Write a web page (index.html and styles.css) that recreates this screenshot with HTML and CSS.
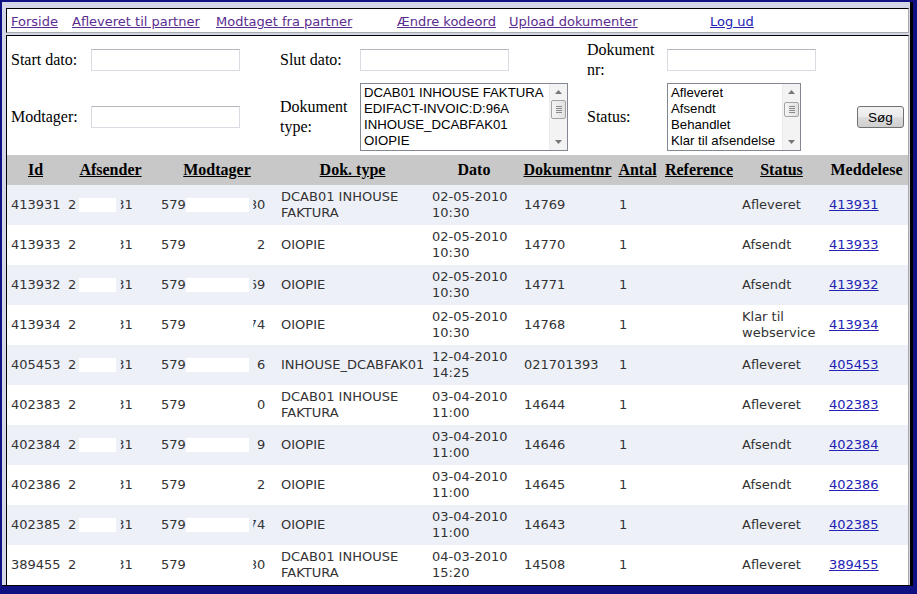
FILE: index.html
```html
<!DOCTYPE html>
<html lang="da">
<head>
<meta charset="utf-8">
<title>Dokumenter</title>
<link rel="stylesheet" href="styles.css">
</head>
<body>
<div class="frame">
  <nav class="nav">
    <a class="v" href="#">Forside</a>
    <a class="v" href="#">Afleveret til partner</a>
    <a class="v" href="#">Modtaget fra partner</a>
    <a class="v" href="#">Ændre kodeord</a>
    <a class="v" href="#">Upload dokumenter</a>
    <a href="#">Log ud</a>
  </nav>
  <div class="panel">
    <form class="filters">
      <label class="lbl">Start dato:</label>
      <input class="txt" type="text">
      <label class="lbl">Slut dato:</label>
      <input class="txt" type="text">
      <label class="lbl">Dokument nr:</label>
      <input class="txt" type="text">
      <span></span>

      <label class="lbl">Modtager:</label>
      <input class="txt" type="text">
      <label class="lbl">Dokument type:</label>
      <div class="listbox lb-type">
        <ul class="opts">
          <li>DCAB01 INHOUSE FAKTURA</li>
          <li>EDIFACT-INVOIC:D:96A</li>
          <li>INHOUSE_DCABFAK01</li>
          <li>OIOPIE</li>
        </ul>
        <div class="sb">
          <span class="sb-btn"><svg width="7" height="4" viewBox="0 0 7 4"><path d="M0 4L3.5 0L7 4Z"/></svg></span>
          <span class="sb-thumb t1"><i></i><i></i><i></i><i></i></span>
          <span class="sb-fill"></span>
          <span class="sb-btn"><svg width="7" height="4" viewBox="0 0 7 4"><path d="M0 0L3.5 4L7 0Z"/></svg></span>
        </div>
      </div>
      <label class="lbl">Status:</label>
      <div class="listbox lb-status">
        <ul class="opts">
          <li>Afleveret</li>
          <li>Afsendt</li>
          <li>Behandlet</li>
          <li>Klar til afsendelse</li>
        </ul>
        <div class="sb">
          <span class="sb-btn"><svg width="7" height="4" viewBox="0 0 7 4"><path d="M0 4L3.5 0L7 4Z"/></svg></span>
          <span class="sb-thumb t2"><i></i><i></i><i></i><i></i></span>
          <span class="sb-fill"></span>
          <span class="sb-btn"><svg width="7" height="4" viewBox="0 0 7 4"><path d="M0 0L3.5 4L7 0Z"/></svg></span>
        </div>
      </div>
      <button class="btn" type="button">Søg</button>
    </form>

    <table class="grid">
      <colgroup>
        <col class="c-id"><col class="c-afs"><col class="c-mod"><col class="c-type"><col class="c-dato">
        <col class="c-nr"><col class="c-antal"><col class="c-ref"><col class="c-status"><col class="c-med">
      </colgroup>
      <thead>
        <tr>
          <th><a href="#">Id</a></th>
          <th><a href="#">Afsender</a></th>
          <th><a href="#">Modtager</a></th>
          <th><a href="#">Dok. type</a></th>
          <th>Dato</th>
          <th><a href="#">Dokumentnr</a></th>
          <th><a href="#">Antal</a></th>
          <th><a href="#">Reference</a></th>
          <th><a href="#">Status</a></th>
          <th>Meddelese</th>
        </tr>
      </thead>
      <tbody>
        <tr>
          <td>413931</td>
          <td>2<span class="redact r-a"></span><span class="cut">3</span>1</td>
          <td>579<span class="redact r-m"></span><span class="cut">8</span>0</td>
          <td>DCAB01 INHOUSE FAKTURA</td>
          <td>02-05-2010 10:30</td>
          <td>14769</td><td>1</td><td></td><td>Afleveret</td>
          <td><a href="#">413931</a></td>
        </tr>
        <tr>
          <td>413933</td>
          <td>2<span class="redact r-a"></span><span class="cut">3</span>1</td>
          <td>579<span class="redact r-m"></span><span class="cut gone">1</span>2</td>
          <td>OIOPIE</td>
          <td>02-05-2010 10:30</td>
          <td>14770</td><td>1</td><td></td><td>Afsendt</td>
          <td><a href="#">413933</a></td>
        </tr>
        <tr>
          <td>413932</td>
          <td>2<span class="redact r-a"></span><span class="cut">3</span>1</td>
          <td>579<span class="redact r-m"></span><span class="cut">6</span>9</td>
          <td>OIOPIE</td>
          <td>02-05-2010 10:30</td>
          <td>14771</td><td>1</td><td></td><td>Afsendt</td>
          <td><a href="#">413932</a></td>
        </tr>
        <tr>
          <td>413934</td>
          <td>2<span class="redact r-a"></span><span class="cut">3</span>1</td>
          <td>579<span class="redact r-m"></span><span class="cut">7</span>4</td>
          <td>OIOPIE</td>
          <td>02-05-2010 10:30</td>
          <td>14768</td><td>1</td><td></td><td>Klar til webservice</td>
          <td><a href="#">413934</a></td>
        </tr>
        <tr>
          <td>405453</td>
          <td>2<span class="redact r-a"></span><span class="cut">3</span>1</td>
          <td>579<span class="redact r-m"></span><span class="cut gone">1</span>6</td>
          <td class="nowrap">INHOUSE_DCABFAK01</td>
          <td>12-04-2010 14:25</td>
          <td>021701393</td><td>1</td><td></td><td>Afleveret</td>
          <td><a href="#">405453</a></td>
        </tr>
        <tr>
          <td>402383</td>
          <td>2<span class="redact r-a"></span><span class="cut">3</span>1</td>
          <td>579<span class="redact r-m"></span><span class="cut gone">1</span>0</td>
          <td>DCAB01 INHOUSE FAKTURA</td>
          <td>03-04-2010 11:00</td>
          <td>14644</td><td>1</td><td></td><td>Afleveret</td>
          <td><a href="#">402383</a></td>
        </tr>
        <tr>
          <td>402384</td>
          <td>2<span class="redact r-a"></span><span class="cut">3</span>1</td>
          <td>579<span class="redact r-m"></span><span class="cut gone">1</span>9</td>
          <td>OIOPIE</td>
          <td>03-04-2010 11:00</td>
          <td>14646</td><td>1</td><td></td><td>Afsendt</td>
          <td><a href="#">402384</a></td>
        </tr>
        <tr>
          <td>402386</td>
          <td>2<span class="redact r-a"></span><span class="cut">3</span>1</td>
          <td>579<span class="redact r-m"></span><span class="cut gone">1</span>2</td>
          <td>OIOPIE</td>
          <td>03-04-2010 11:00</td>
          <td>14645</td><td>1</td><td></td><td>Afsendt</td>
          <td><a href="#">402386</a></td>
        </tr>
        <tr>
          <td>402385</td>
          <td>2<span class="redact r-a"></span><span class="cut">3</span>1</td>
          <td>579<span class="redact r-m"></span><span class="cut">7</span>4</td>
          <td>OIOPIE</td>
          <td>03-04-2010 11:00</td>
          <td>14643</td><td>1</td><td></td><td>Afleveret</td>
          <td><a href="#">402385</a></td>
        </tr>
        <tr>
          <td>389455</td>
          <td>2<span class="redact r-a"></span><span class="cut">3</span>1</td>
          <td>579<span class="redact r-m"></span><span class="cut">8</span>0</td>
          <td>DCAB01 INHOUSE FAKTURA</td>
          <td>04-03-2010 15:20</td>
          <td>14508</td><td>1</td><td></td><td>Afleveret</td>
          <td><a href="#">389455</a></td>
        </tr>
        <tr class="tail" aria-hidden="true">
          <td></td><td></td><td></td><td></td><td></td>
          <td></td><td></td><td></td><td></td><td></td>
        </tr>
      </tbody>
    </table>
  </div>
</div>
</body>
</html>
```

FILE: styles.css
```css
html, body {
  margin: 0;
  height: 594px;
  overflow: hidden;
}

body {
  background: #0f1082;
  font-family: "Liberation Serif", "Times New Roman", serif;
  color: #000;
}

.frame {
  box-sizing: border-box;
  margin: 2px 4px 0 2px;
  height: 584px;
  padding: 6px 1px 0 4px;
  background: #d3d6e6;
  border-right: 3px solid #000;
  border-bottom: 1px solid #000;
  overflow: hidden;
}

/* top navigation */
.nav {
  display: grid;
  grid-template-columns: 61px 144px 181px 112px 201px auto;
  background: #fff;
  border: 1px solid #000;
  border-right-color: #a9a9a9;
  border-bottom-color: #a9a9a9;
  padding: 5px 4px 2px;
  font: 13px/16px "DejaVu Sans", Verdana, sans-serif;
}

.nav a {
  color: #2222b4;
  justify-self: start;
}

.nav a.v {
  color: #5b2c91;
}

/* main panel */
.panel {
  margin-top: 2px;
  background: #fff;
  border-top: 1px solid #000;
  border-left: 1px solid #000;
  border-right: 1px solid #a9a9a9;
}

.filters {
  display: grid;
  grid-template-columns: 80px 189px 80px 227px 80px 190px 47px;
  row-gap: 3px;
  align-items: center;
  padding: 4px;
  margin: 0;
}

.lbl {
  font-size: 16px;
  line-height: 20px;
}

.txt {
  box-sizing: border-box;
  width: 149px;
  height: 22px;
  margin: 0;
  border: 1px solid #dadbe2;
  border-top-color: #b4b6bd;
  background: #fff;
  padding: 0 2px;
}

.listbox {
  box-sizing: border-box;
  height: 68px;
  display: flex;
  border: 1px solid #828790;
  background: #fff;
}

.lb-type { width: 208px; }
.lb-status { width: 134px; }

.opts {
  flex: 1;
  list-style: none;
  margin: 0;
  padding: 1px 0 0 3px;
  font: 13.2px/16px "Liberation Sans", Arial, sans-serif;
  color: #000;
  white-space: nowrap;
  overflow: hidden;
}

.sb {
  width: 17px;
  display: flex;
  flex-direction: column;
  background: #f3f3f3;
  border-left: 1px solid #ececec;
}

.sb-btn {
  height: 16px;
  display: flex;
  align-items: center;
  justify-content: center;
  flex: none;
}

.sb-btn svg path {
  fill: #777;
}

.sb-thumb {
  box-sizing: border-box;
  margin: 0 1px;
  border: 1px solid #a3a3a3;
  border-radius: 2px;
  background: linear-gradient(to right, #f4f4f4, #e2e2e2);
  display: flex;
  flex-direction: column;
  align-items: center;
  justify-content: center;
  gap: 1px;
  flex: none;
}

.sb-thumb i {
  display: block;
  width: 6px;
  height: 1px;
  background: #8a8a8a;
}

.t1 { height: 19px; }
.t2 { height: 15px; margin-top: 2px; }

.sb-fill { flex: 1; }

.btn {
  box-sizing: border-box;
  width: 47px;
  height: 22px;
  padding: 0;
  border: 1px solid #707070;
  border-radius: 3px;
  background: linear-gradient(#f2f2f2 0%, #ebebeb 50%, #dddddd 50%, #cfcfcf 100%);
  font: 13.5px "Liberation Sans", Arial, sans-serif;
  color: #000;
}

/* results table */
.grid {
  width: 901px;
  table-layout: fixed;
  border-collapse: collapse;
  border-spacing: 0;
}

.c-id { width: 57px; }
.c-afs { width: 93px; }
.c-mod { width: 120px; }
.c-type { width: 151px; }
.c-dato { width: 92px; }
.c-nr { width: 95px; }
.c-antal { width: 45px; }
.c-ref { width: 78px; }
.c-status { width: 87px; }
.c-med { width: 83px; }

.grid th {
  height: 30px;
  padding: 0;
  background: #c8c8c8;
  font: bold 16px/18px "Liberation Serif", "Times New Roman", serif;
  text-align: center;
  vertical-align: middle;
  color: #000;
  white-space: nowrap;
}

.grid th a {
  color: #000;
}

.grid td {
  height: 40px;
  padding: 0 0 0 4px;
  font: 13px/16px "DejaVu Sans", Verdana, sans-serif;
  color: #333;
  vertical-align: middle;
  white-space: nowrap;
}

.grid td:nth-child(4),
.grid td:nth-child(5),
.grid td:nth-child(9) {
  white-space: normal;
}

.grid td.nowrap {
  white-space: nowrap;
}

.grid tbody tr:nth-child(odd) {
  background: #eef0f8;
}

.grid tbody tr:nth-child(even) {
  background: #fff;
}

.grid td a {
  color: #2222b4;
}

.redact {
  display: inline-block;
  height: 14px;
  vertical-align: -3px;
  background: #fff;
}

.r-a {
  width: 37px;
  margin-left: 3px;
}

.r-m {
  width: 63px;
}

.cut {
  display: inline-block;
  clip-path: inset(0 0 0 55%);
}

.cut.gone {
  visibility: hidden;
}
```
